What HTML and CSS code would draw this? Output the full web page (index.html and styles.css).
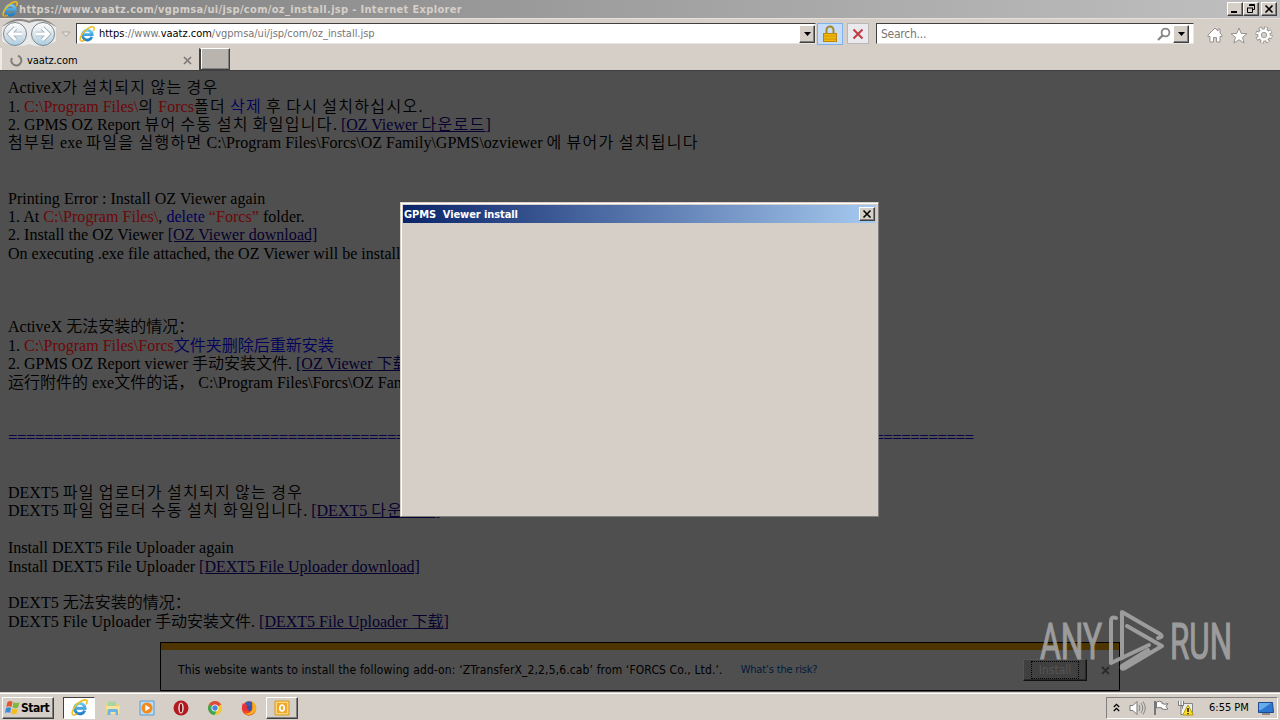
FILE: index.html
```html
<!DOCTYPE html>
<html lang="en">
<head>
  <meta charset="UTF-8">
  <title>https://www.vaatz.com/vgpmsa/ui/jsp/com/oz_install.jsp - Internet Explorer</title>
  <link rel="stylesheet" href="styles.css">
</head>
<body>

  <!-- shared icons -->
  <svg class="defs" width="0" height="0">
    <defs>
      <linearGradient id="blue" x1="0" y1="0" x2="0" y2="1">
        <stop offset="0" stop-color="#6cc9f5"/><stop offset="1" stop-color="#1b7fc9"/>
      </linearGradient>
      <linearGradient id="round" x1="0" y1="0" x2="0" y2="1">
        <stop offset="0" stop-color="#ffffff"/><stop offset=".5" stop-color="#dce5eb"/><stop offset="1" stop-color="#aacde2"/>
      </linearGradient>
      <symbol id="ie" viewBox="0 0 16 16">
        <path d="M12.900 10.800A4.900 4.900 0 1 1 13.200 8.600H4.200" fill="none" stroke="url(#blue)" stroke-width="2.800"/>
        <path d="M1.600 14.800C-.2 12.400 4 5 9 2.300C12 .6 15 .2 15.200 2.200C15.300 3 14.900 4 14.300 5" fill="none" stroke="#f2c01c" stroke-width="1.500"/>
        <path d="M1.600 14.800C2.600 15.500 4.500 14.800 6 13.700" fill="none" stroke="#e0a810" stroke-width="1.200"/>
      </symbol>
    </defs>
  </svg>

  <header class="titlebar">
    <svg class="title-icon" width="16" height="16"><use href="#ie"/></svg>
    <span class="title-text">https://www.vaatz.com/vgpmsa/ui/jsp/com/oz_install.jsp - Internet Explorer</span>
    <div class="win-buttons">
      <span class="win-btn"><svg width="12" height="10"><path d="M2 8h6" stroke="#000" stroke-width="2"/></svg></span>
      <span class="win-btn"><svg width="12" height="10"><path d="M4.500 1v-.5h5v5h-2M4 1.500h6M2.500 4v4.500h5V4M2 4h6" fill="none" stroke="#000"/></svg></span>
      <span class="win-btn close"><svg width="12" height="10"><path d="M2.500 1.500l7 7M9.500 1.500l-7 7" stroke="#000" stroke-width="1.600"/></svg></span>
    </div>
  </header>

  <nav class="navbar">
    <svg class="back-forward" width="76" height="30" viewBox="0 0 76 30">
      <path d="M3 8Q15-3 29 3Q43-3 55 8" fill="none" stroke="#8f8d8b" stroke-width="2"/>
      <path d="M2 22V8q13-9 27-4q14-5 27 4v14q-13 9-27 3q-14 6-27-3" fill="#e9e9e9"/>
      <circle cx="15" cy="15" r="11.500" fill="url(#round)" stroke="#7d868d"/>
      <circle cx="43" cy="15" r="11.500" fill="url(#round)" stroke="#7d868d"/>
      <path d="M22 15H10M15.500 9L9.500 15l6 6" fill="none" stroke="#a3b4c0" stroke-width="4.600"/>
      <path d="M22 15H10M15.500 9L9.500 15l6 6" fill="none" stroke="#fff" stroke-width="2.800"/>
      <path d="M36 15h12M42.500 9l6 6l-6 6" fill="none" stroke="#a3b4c0" stroke-width="4.600"/>
      <path d="M36 15h12M42.500 9l6 6l-6 6" fill="none" stroke="#fff" stroke-width="2.800"/>
      <path d="M62 13h8l-4 4.500z" fill="#e8e5e0" stroke="#aaa59f"/>
    </svg>
    <div class="field address">
      <svg width="16" height="16"><use href="#ie"/></svg>
      <span class="url"><b>https</b>://www.<b>vaatz.com</b>/vgpmsa/ui/jsp/com/oz_install.jsp</span>
      <span class="drop"><svg width="7" height="4"><path d="M0 0h7L3.500 4z"/></svg></span>
    </div>
    <span class="tool lock">
      <svg width="14" height="18" viewBox="0 0 14 18">
        <path d="M3.500 9V5a3.500 3.500 0 0 1 7 0v4" fill="none" stroke="#a8892a" stroke-width="2"/>
        <rect x=".5" y="8.500" width="13" height="8" fill="#f0b90c" stroke="#b98608"/>
        <path d="M1 11h12M1 14h12" stroke="#cf9405"/>
      </svg>
    </span>
    <span class="tool stop">
      <svg width="12" height="12"><path d="M1.500 1.500l9 9M10.500 1.500l-9 9" stroke="#c33a41" stroke-width="2"/></svg>
    </span>
    <div class="field search">
      <span class="placeholder">Search...</span>
      <svg width="14" height="14"><circle cx="8.500" cy="5.500" r="3.900" fill="none" stroke="#888" stroke-width="1.800"/><path d="M5.600 8.400L1 13" stroke="#888" stroke-width="2.200"/></svg>
      <span class="drop"><svg width="7" height="4"><path d="M0 0h7L3.500 4z"/></svg></span>
    </div>
    <div class="commands">
      <svg width="16" height="16"><path d="M8 1L1 8v1.500h2V15h3.500v-4.500h3V15H13V9.500h2V8l-2-2V2h-2v2z" fill="#fff" stroke="#96928e"/></svg>
      <svg width="18" height="17"><path d="M9 1l2.200 5.400l5.800.3l-4.500 3.600l1.600 5.700L9 12.800L3.900 16l1.600-5.700L1 6.700l5.800-.3z" fill="#fff" stroke="#96928e"/></svg>
      <svg width="18" height="18" viewBox="0 0 18 18">
        <circle cx="9" cy="9" r="6.800" fill="none" stroke="#96928e" stroke-width="3.600" stroke-dasharray="3.600 1.740"/>
        <circle cx="9" cy="9" r="4.500" fill="none" stroke="#96928e" stroke-width="4.600"/>
        <circle cx="9" cy="9" r="6.600" fill="none" stroke="#fff" stroke-width="2.600" stroke-dasharray="2 3.184" stroke-dashoffset="-.7"/>
        <circle cx="9" cy="9" r="4.400" fill="none" stroke="#fff" stroke-width="2.800"/>
      </svg>
    </div>
  </nav>

  <div class="tabs">
    <div class="tab">
      <svg width="13" height="13"><path d="M8 1.800A5 5 0 1 1 2 4" fill="none" stroke="#807d7a" stroke-width="2"/></svg>
      <span class="tab-name">vaatz.com</span>
      <svg class="tab-close" width="9" height="9"><path d="M1 1l7 7M8 1L1 8" stroke="#7d7975" stroke-width="1.700"/></svg>
    </div>
    <div class="new-tab"></div>
  </div>

  <main class="page">
    <div class="line">ActiveX<span class="ko">가 설치되지 않는 경우</span></div>
    <div class="line">1. <span class="red">C:\Program Files\</span><span class="ko">의 </span><span class="red">Forcs</span><span class="ko">폴더 <span class="blue">삭제</span> 후 다시 설치하십시오</span>.</div>
    <div class="line">2. GPMS OZ Report <span class="ko">뷰어 수동 설치 화일입니다</span>. <a>[OZ Viewer <span class="ko">다운로드</span>]</a></div>
    <div class="line"><span class="ko">첨부된</span> exe <span class="ko">파일을 실행하면</span> C:\Program Files\Forcs\OZ Family\GPMS\ozviewer <span class="ko">에 뷰어가 설치됩니다</span></div>
    <br><br>
    <div class="line en">Printing Error : Install OZ Viewer again</div>
    <div class="line en">1. At <span class="red">C:\Program Files\</span>, <span class="blue">delete</span> <span class="red">“Forcs”</span> folder.</div>
    <div class="line en">2. Install the OZ Viewer <a>[OZ Viewer download]</a></div>
    <div class="line">On executing .exe file attached, the OZ Viewer will be install</div>
    <br><br><br>
    <div class="line">ActiveX <span class="zh">无法安装的情况：</span></div>
    <div class="line">1. <span class="red">C:\Program Files\Forcs</span><span class="zh blue">文件夹删除后重新安装</span></div>
    <div class="line">2. GPMS OZ Report viewer <span class="zh">手动安装文件</span>. <a>[OZ Viewer <span class="zh">下载</span></a></div>
    <div class="line"><span class="zh">运行附件的</span> exe<span class="zh">文件的话，</span> C:\Program Files\Forcs\OZ Fam</div>
    <br><br>
    <div class="line rule">===========================================================================================================</div>
    <br><br>
    <div class="line">DEXT5 <span class="ko">파일 업로더가 설치되지 않는 경우</span></div>
    <div class="line">DEXT5 <span class="ko">파일 업로더 수동 설치 화일입니다</span>. <a>[DEXT5 <span class="ko">다운로드</span>]</a></div>
    <br>
    <div class="line">Install DEXT5 File Uploader again</div>
    <div class="line">Install DEXT5 File Uploader <a>[DEXT5 File Uploader download]</a></div>
    <br>
    <div class="line">DEXT5 <span class="zh">无法安装的情况：</span></div>
    <div class="line">DEXT5 File Uploader <span class="zh">手动安装文件</span>. <a>[DEXT5 File Uploader <span class="zh">下载</span>]</a></div>

    <div class="addon-bar">
      <span class="addon-text">This website wants to install the following add-on: ‘ZTransferX_2,2,5,6.cab’ from ‘FORCS Co., Ltd.’.</span>
      <span class="risk">What’s the risk?</span>
      <span class="install"><span>Install</span></span>
      <svg class="addon-close" width="9" height="9"><path d="M1 1l7 7M8 1L1 8" stroke="#2b2b2b" stroke-width="1.800"/></svg>
    </div>
  </main>

  <div class="dialog">
    <div class="dialog-title">
      <span class="dialog-name">GPMS&nbsp; Viewer install</span>
      <span class="win-btn"><svg width="12" height="10"><path d="M2.500 1.500l7 7M9.500 1.500l-7 7" stroke="#000" stroke-width="1.600"/></svg></span>
    </div>
  </div>

  <svg class="watermark" width="210" height="66" viewBox="0 0 210 66">
    <text x="3" y="50.500" textLength="62" lengthAdjust="spacingAndGlyphs">ANY</text>
    <g fill="none" stroke="#a5a5a5" stroke-width="4" stroke-linejoin="round" stroke-linecap="round">
      <path d="M79 10Q74 8 74 13V55L112 37"/>
      <path d="M85 50V4L123 26Q127 29 121 30"/>
      <path d="M90 18L125 38L88 60Q84 62 85 58L111 42"/>
    </g>
    <text x="133" y="50.500" textLength="62" lengthAdjust="spacingAndGlyphs">RUN</text>
  </svg>

  <footer class="taskbar">
    <div class="start">
      <svg width="15" height="15" viewBox="0 0 15 15">
        <path d="M2.500 2Q5 .2 7.500 1.800L6.500 7Q4 5.500 1.300 7z" fill="#e6582c"/>
        <path d="M8.500 2.200Q11 3.800 14.500 2.300L13 7.600Q10 9 7.500 7.300z" fill="#7fb93b"/>
        <path d="M1 8Q3.800 6.600 6.200 8L5 13Q2.500 11.600 0 13z" fill="#3c8bdb"/>
        <path d="M7.200 8.400Q10 10 12.700 8.700L11.500 13.600Q9 15 6 13.400z" fill="#f6bd22"/>
      </svg>
      <span>Start</span>
    </div>
    <div class="task active"><svg width="17" height="17"><use href="#ie"/></svg></div>
    <div class="task">
      <svg width="16" height="16"><path d="M1 3h6l1 1.500h6V14H1z" fill="#efd171"/><path d="M3 1.500h8v5H3z" fill="#a8d6a1"/><path d="M1 6h14l-1 8H2z" fill="#f7e3a0"/><path d="M2.500 15v-4.500q0-1.500 1.500-1.500h7.500q1.500 0 1.500 1.500V15h-2.500v-3h-5v3z" fill="#6cb5e2"/></svg>
    </div>
    <div class="task">
      <svg width="16" height="16"><path d="M1 1h14v14H1z" fill="#b9dcf6" stroke="#5a9bd0"/><circle cx="8" cy="8" r="5.500" fill="#f08a1c"/><path d="M6.300 4.800v6.400L11.300 8z" fill="#fff"/></svg>
    </div>
    <div class="task">
      <svg width="16" height="16"><circle cx="8" cy="8" r="7.500" fill="#b5181e"/><ellipse cx="8" cy="8" rx="2.700" ry="5.500" fill="#eeeae6"/><ellipse cx="8" cy="8" rx="1.300" ry="4.500" fill="#8a0f14"/></svg>
    </div>
    <div class="task">
      <svg width="16" height="16"><circle cx="8" cy="8" r="7" fill="#f4c62c"/><path d="M8 8L1.900 4.500A7 7 0 0 1 14.100 4.500z" fill="#dc4a38"/><path d="M8 8L1.900 4.500A7 7 0 0 0 7.500 15L10.500 9z" fill="#3fa456"/><circle cx="8" cy="8" r="3.500" fill="#fff"/><circle cx="8" cy="8" r="2.700" fill="#4a85dc"/></svg>
    </div>
    <div class="task">
      <svg width="16" height="16"><circle cx="8" cy="8.500" r="7.200" fill="#ee4a24"/><path d="M4 3Q8-.5 12.500 3Q11 4 11 8L6 7z" fill="#3a5bb0"/><path d="M11 1Q17.500 6 14 12Q9.500 17 3.500 13.500Q10 14 11.500 8.500z" fill="#f9b01f"/><circle cx="8" cy="8.500" r="2.800" fill="#3b4fa0"/><path d="M1.500 3L3 4.500L6.500 5L5.500 7.500L8 10.500Q4 12 1 9.500z" fill="#e8323b"/></svg>
    </div>
    <div class="task raised">
      <svg width="16" height="16"><path d="M1 1h14v14H1z" fill="#f8d777" stroke="#d8951c"/><path d="M3 3h10v10H3z" fill="#f3a72a"/><ellipse cx="8" cy="8" rx="2.200" ry="3" fill="none" stroke="#fff" stroke-width="1.700"/></svg>
    </div>
    <div class="tray">
      <svg class="chevrons" width="7" height="9"><path d="M.8 4L3.500 1.300L6.200 4M.8 8L3.500 5.300L6.200 8" fill="none" stroke="#000" stroke-width="1.300"/></svg>
      <svg class="sound" width="17" height="16"><path d="M1 5.500h3L8 1.500v13L4 10.500H1z" fill="#fff" stroke="#777"/><path d="M10 5q2 3 0 6M12 3q3.500 5 0 10M14 1.500q4.500 6.500 0 13" fill="none" stroke="#858585"/></svg>
      <svg class="flag" width="17" height="16"><path d="M2 1v14" stroke="#777" stroke-width="2"/><path d="M3.500 2q3-1.500 5.500 0v1.500q3 1.500 6 0l-2 3l2 2.500q-3 1-6 0V8q-3-1-5.500 0z" fill="#fff" stroke="#777"/></svg>
      <svg class="network" width="17" height="16"><path d="M5.500 3.500h10v9h-10z" fill="#e8edf0" stroke="#858585"/><path d="M1.500 1v4.500h5V1M4 1v4M4 5.500v9h4" fill="#fff" stroke="#777"/><path d="M11 5l5.300 10H5.700z" fill="#fbe02b" stroke="#b99c0b"/><path d="M11 8v4M11 13v1.300" stroke="#000" stroke-width="1.300"/></svg>
      <span class="clock">6:55 PM</span>
      <svg class="desktop" width="16" height="14"><path d="M.5 1.500h14l1 10h-15z" fill="#2d76cf" stroke="#1b4b94"/><path d="M1 2h12L3 9H1z" fill="#69abea"/><path d="M4 13h8" stroke="#444"/></svg>
    </div>
  </footer>

</body>
</html>
```
FILE: styles.css
```css
* {
  box-sizing: border-box;
}

body {
  margin: 0;
  width: 1280px;
  height: 720px;
  overflow: hidden;
  position: relative;
  display: flex;
  flex-direction: column;
  background: #d5cfc8;
  font-family: "DejaVu Sans", sans-serif;
  font-stretch: condensed;
  font-size: 11px;
  color: #000;
  white-space: nowrap;
}

svg {
  display: block;
  flex: none;
}

.defs {
  position: absolute;
}

/* window frame */
.titlebar {
  height: 18px;
  flex: none;
  display: flex;
  align-items: center;
  padding: 0 3px 0 2px;
  background: linear-gradient(90deg, #808080, #c0c0c0);
}

.title-text {
  flex: 1;
  margin-left: 1px;
  color: #d5cfc8;
  font-weight: bold;
  letter-spacing: .33px;
}

.win-buttons {
  display: flex;
}

.win-btn {
  width: 16px;
  height: 14px;
  display: flex;
  align-items: center;
  justify-content: center;
  background: #d5cfc8;
  border: 1px solid;
  border-color: #fff #404040 #404040 #fff;
  box-shadow: inset -1px -1px #808080;
}

.close {
  margin-left: 2px;
}

/* address row */
.navbar {
  height: 30px;
  flex: none;
  display: flex;
  align-items: center;
  border-top: 1px solid #e4e0db;
}

.field {
  height: 21px;
  display: flex;
  align-items: center;
  background: #fff;
  border: 1px solid;
  border-color: #404040 #e8e4df #e8e4df #404040;
}

.address {
  width: 740px;
  padding-left: 2px;
}

.url {
  flex: 1;
  margin-left: 4px;
  color: #777;
  letter-spacing: -.02px;
}

.url b {
  font-weight: normal;
  color: #000;
}

.drop {
  width: 16px;
  height: 18px;
  display: flex;
  align-items: center;
  justify-content: center;
  background: #d5cfc8;
  border: 1px solid;
  border-color: #fff #404040 #404040 #fff;
  box-shadow: inset -1px -1px #808080;
}

.tool {
  display: flex;
  align-items: center;
  justify-content: center;
}

.lock {
  width: 26px;
  height: 22px;
  margin-left: 1px;
  background: #c6dcf8;
  border: 1px solid #7fb0ea;
}

.stop {
  width: 22px;
  height: 21px;
  margin-left: 4px;
  background: #eae9ee;
  border: 1px solid #b9b6b5;
}

.search {
  width: 318px;
  margin-left: 7px;
  padding: 0 4px 0 4px;
}

.placeholder {
  flex: 1;
  color: #777;
  font-size: 12px;
  letter-spacing: -.25px;
}

.search .drop {
  margin-left: 2px;
}

.commands {
  display: flex;
  align-items: center;
  gap: 7px;
  margin: 3px 0 0 13px;
}

/* tabs */
.tabs {
  height: 23px;
  flex: none;
  display: flex;
  border-bottom: 1px solid #404040;
}

.tab {
  width: 199px;
  display: flex;
  align-items: center;
  padding: 2px 7px 0 8px;
  border-left: 2px solid #eeebe7;
}

.tab-name {
  flex: 1;
  margin-left: 4px;
  letter-spacing: -.1px;
}

.new-tab {
  width: 31px;
  height: 22px;
  background: #bab4af;
  border: 1px solid;
  border-color: #fff #404040 #404040;
  border-left: 2px solid #404040;
  box-shadow: inset 1px 0 #fff, inset -1px -1px #808080;
}

/* dimmed document */
.page {
  position: relative;
  height: 621px;
  flex: none;
  padding: 8.300px 8px 0;
  overflow: hidden;
  background: #4f4f4f;
  font-family: "Liberation Serif", "Noto Sans CJK KR", serif;
  font-stretch: normal;
  font-size: 16px;
  line-height: 18.400px;
}

.line {
  height: 18.400px;
}

.en {
  letter-spacing: .04px;
}

.ko,
.zh {
  line-height: 0;
}

.ko {
  font-family: "Noto Sans CJK KR", sans-serif;
  font-weight: 350;
  letter-spacing: 1.300px;
  word-spacing: -.8px;
}

.zh {
  font-family: "Noto Sans CJK SC", sans-serif;
  font-weight: 350;
}

.red {
  color: #6c0808;
}

.blue {
  color: #00005c;
}

.page a {
  color: #06002e;
  text-decoration: underline;
}

.rule {
  color: #06004a;
  text-shadow: .5px 0 #06004a;
}

.addon-bar {
  position: absolute;
  left: 160px;
  bottom: 1px;
  width: 960px;
  height: 49px;
  display: flex;
  align-items: center;
  padding: 0 9px 0 17px;
  background: #4f4f4f;
  border: 1px solid #000;
  box-shadow: inset 0 7px #4e3500;
  font-family: "DejaVu Sans", sans-serif;
  font-stretch: condensed;
  font-size: 12px;
}

.addon-text,
.risk,
.install,
.addon-close {
  margin-top: 7px;
}

.addon-text {
  letter-spacing: .13px;
}

.risk {
  flex: 1;
  margin-left: 18px;
  color: #001b3b;
  font-size: 11px;
  letter-spacing: -.2px;
}

.install {
  width: 64px;
  height: 22px;
  padding: 1px 7px;
  border: 1px solid;
  border-color: #555 #111 #111 #555;
  box-shadow: inset -1px -1px #292929;
  background: #404040;
  color: #555;
  line-height: 16px;
  text-align: center;
}

.install span {
  display: block;
  border: 1px dotted #000;
}

.addon-close {
  margin-left: 14px;
}

/* modal window */
.dialog {
  position: absolute;
  left: 400px;
  top: 202px;
  width: 479px;
  height: 315px;
  padding: 1px;
  background: #d5cfc8;
  border: 1px solid;
  border-color: #d5cfc8 #808080 #808080 #d5cfc8;
  box-shadow: inset 1px 1px #fff;
}

.dialog-title {
  height: 18px;
  margin: 1px;
  display: flex;
  align-items: center;
  justify-content: space-between;
  padding: 0 1px;
  background: linear-gradient(90deg, #0a246a, #a6caf0);
  color: #fff;
  font-weight: bold;
}

.dialog-name {
  letter-spacing: -.08px;
}

.watermark {
  position: absolute;
  left: 1037px;
  top: 608px;
  opacity: .9;
}

.watermark text {
  font-family: Roboto, sans-serif;
  font-size: 50px;
  font-stretch: normal;
  fill: #a5a5a5;
  stroke: #a5a5a5;
  stroke-width: 1.200px;
}

/* taskbar */
.taskbar {
  height: 28px;
  flex: none;
  display: flex;
  align-items: center;
  padding: 2px 2px 0;
  border-top: 1px solid #d5cfc8;
  box-shadow: inset 0 1px #fff;
}

.start {
  width: 52px;
  height: 22px;
  display: flex;
  align-items: center;
  padding-left: 2px;
  gap: 1px;
  border: 1px solid;
  border-color: #fff #404040 #404040 #fff;
  box-shadow: inset -1px -1px #808080;
  font-size: 12px;
  font-weight: bold;
  letter-spacing: -.5px;
}

.task {
  width: 34px;
  height: 22px;
  display: flex;
  align-items: center;
  justify-content: center;
}

.active {
  width: 32px;
  margin: 0 1px 0 9px;
  background: #fff;
  border: 1px solid;
  border-color: #404040 #fff #fff #404040;
}

.raised {
  width: 32px;
  border: 1px solid;
  border-color: #fff #404040 #404040 #fff;
  box-shadow: inset -1px -1px #808080;
}

.tray {
  width: 172px;
  height: 22px;
  margin-left: auto;
  display: flex;
  align-items: center;
  padding-left: 6px;
  border: 1px solid;
  border-color: #808080 #fff #fff #808080;
}

.sound {
  margin-left: 9px;
}

.flag {
  margin-left: 7px;
}

.network {
  margin-left: 7px;
}

.clock {
  flex: 1;
  margin-left: 15px;
}

.desktop {
  margin-right: 3px;
}
```
